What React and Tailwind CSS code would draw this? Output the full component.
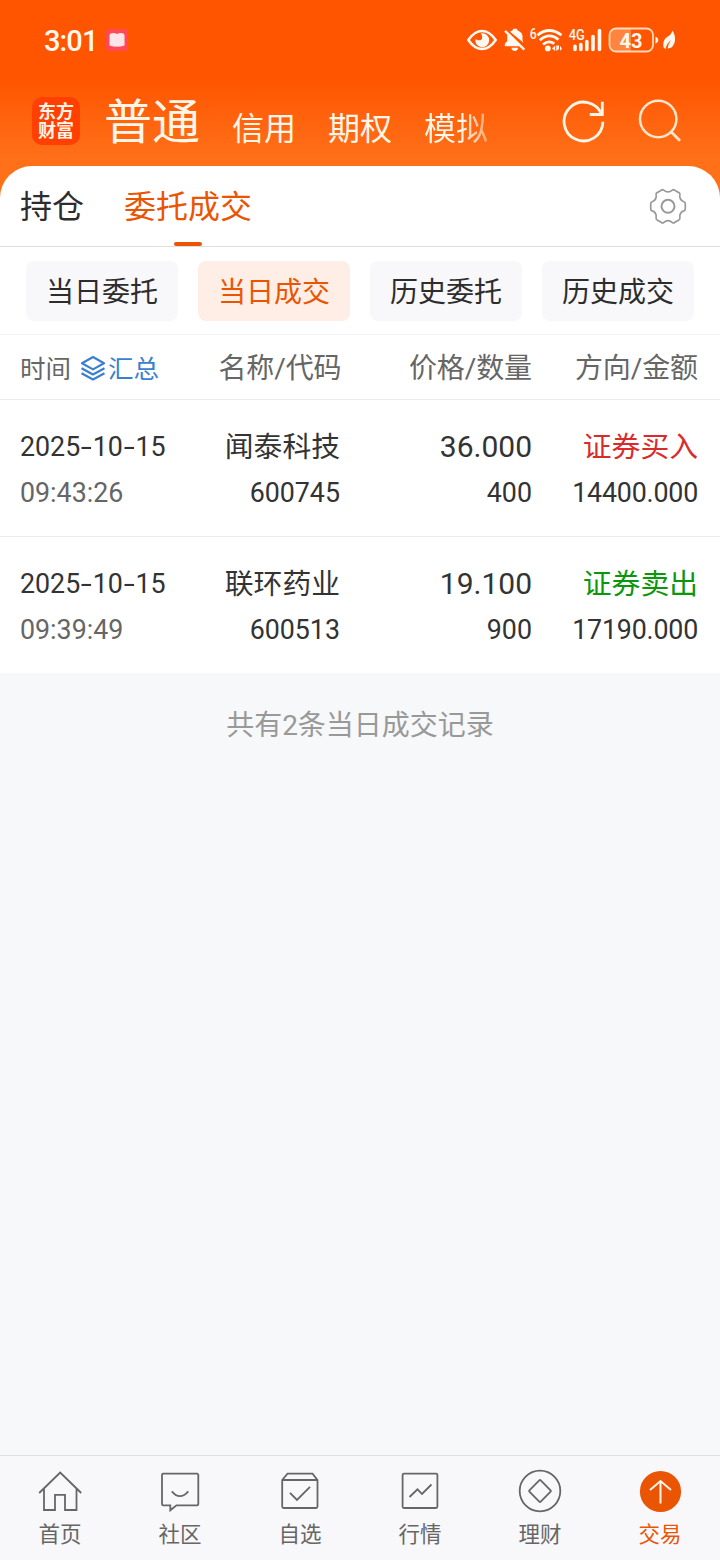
import React from "react";

const filters = ["当日委托", "当日成交", "历史委托", "历史成交"];

const trades = [
  { date: "2025-10-15", time: "09:43:26", name: "闻泰科技", code: "600745", price: "36.000", qty: "400", side: "证券买入", buy: true, amount: "14400.000" },
  { date: "2025-10-15", time: "09:39:49", name: "联环药业", code: "600513", price: "19.100", qty: "900", side: "证券卖出", buy: false, amount: "17190.000" },
];

function gearPath(cx, cy) {
  const pt = (r, deg) => {
    const a = (deg * Math.PI) / 180;
    return `${(cx + r * Math.cos(a)).toFixed(2)} ${(cy + r * Math.sin(a)).toFixed(2)}`;
  };
  let d = `M${pt(16.8, -15)}`;
  for (let k = 0; k < 6; k++) {
    const b = k * 60;
    d += `Q${pt(18, b - 12)} ${pt(17.4, b - 7)}L${pt(17.4, b + 7)}Q${pt(18, b + 12)} ${pt(16.8, b + 15)}Q${pt(12.6, b + 30)} ${pt(16.8, b + 45)}`;
  }
  return d + "Z";
}

function StatusBar() {
  return (
    <div className="flex h-20 items-center justify-between pl-[44px] pr-[43px] text-[#fff8ee]">
      <div className="flex items-center gap-[9px]">
        <span className="mt-0.5 w-[53px] whitespace-nowrap text-[29px] font-medium leading-none tracking-[-0.9px]">3:01</span>
        <svg width="22" height="22" viewBox="0 0 22 22">
          <rect width="22" height="22" rx="4" fill="#ff4a55" />
          <path d="M4.5 4.5Q8 3.5 11 5Q14 3.5 17.5 4.5L18.5 6V16.5Q15 18 11 17.5Q7 18 3.5 16.5V6Z" fill="#ffe3ea" />
        </svg>
      </div>
      <svg width="211" height="28" viewBox="466 26 211 28" fill="none" stroke="currentColor">
        <path d="M468.3 40Q474.5 31 482 31T495.7 40Q489.500 49 482 49T468.3 40Z" strokeWidth="2.600" strokeLinejoin="round" />
        <path d="M482 33.300A7 7 0 1 1 475.300 39.200Q480.500 41.500 482 38.700Q483 36 480.800 33.600Z" fill="currentColor" stroke="none" />
        <path d="M507.200 33.500L520.500 46.300H504.800V43.800L507.200 41ZM510 31.800Q513 30.600 513.300 28.800H516.700Q517 30.300 519.500 31.500Q522.500 33.200 522.500 36.500V40.500L523.500 42.800ZM511.300 47.800H518.200Q517.500 51 514.800 51Q512 51 511.300 47.800Z" fill="currentColor" stroke="none" />
        <path d="M505 30.800L524.300 49.600" strokeWidth="2.400" />
        <text x="529.800" y="39" fontSize="15.500" fontWeight="500" textLength="7" lengthAdjust="spacingAndGlyphs" fill="currentColor" stroke="none">6</text>
        <path d="M537.500 35.200Q549 25.800 561.500 35.200M539.800 40.200Q549 32 558.500 39.600M543 44.600Q548.500 39.600 554.300 43.600" strokeWidth="2.700" />
        <circle cx="547.800" cy="48.400" r="2.900" fill="currentColor" stroke="none" />
        <path d="M552 48.500L555.200 45.600V51ZM556.300 45.500V51L559 49V45.500ZM560 46L562 48.500L560 51Z" fill="currentColor" stroke="none" />
        <text x="568.800" y="39.700" fontSize="15" fontWeight="500" textLength="16" lengthAdjust="spacingAndGlyphs" fill="currentColor" stroke="none">4G</text>
        <path d="M575 46.300V49.500M580.800 44.500V49.500M586.800 41.500V49.500M593 36.500V49.500M599.500 30.500V49.500" strokeWidth="3.600" strokeLinecap="round" />
        <path d="M616 29H631V51H616Q610 51 610 45V35Q610 29 616 29Z" fill="#ff8440" stroke="none" />
        <rect x="609.500" y="28.500" width="43.500" height="23" rx="6.500" stroke="#ffd9b8" strokeWidth="1.800" />
        <text x="619.500" y="47.500" fontSize="20.500" fontWeight="700" textLength="23" lengthAdjust="spacingAndGlyphs" fill="currentColor" stroke="none">43</text>
        <path d="M655.500 36.500Q658.300 37.500 658.300 40T655.500 44Z" fill="currentColor" stroke="none" />
        <path d="M672.500 30.700Q675.800 35.500 674.800 41.500Q673.500 48.300 667.500 48.500Q668 44 671.200 40Q666.300 43.500 665.500 49.300L663.600 47.500Q662.300 42 665.500 38.200Q668 36.400 669.800 35.200Q671.500 33.700 672.500 30.700Z" fill="currentColor" stroke="none" />
      </svg>
    </div>
  );
}

function TopNav() {
  return (
    <div className="flex h-[86px] items-start text-[#fff6e8]">
      <div className="ml-8 mt-[17px] grid h-12 w-12 place-content-center rounded-[10px] bg-[#ff4000] text-center text-[18px] font-bold leading-[19px] text-[#fff3e4]">
        <span>东方</span>
        <span>财富</span>
      </div>
      <div className="ml-6 mt-[19px] text-[48px] leading-[48px]">普通</div>
      <div className="ml-8 mt-[33px] flex gap-8 text-[32px] leading-8">
        <span>信用</span>
        <span>期权</span>
        <span className="bg-linear-to-r from-[#fff6e8] from-60% to-[#ffa56c] bg-clip-text text-transparent">模拟</span>
      </div>
      <svg className="ml-[74px] mt-[18px]" width="122" height="46" viewBox="562 98 122 46" fill="none" stroke="currentColor">
        <path d="M602.900 121.800A19.400 19.400 0 1 1 601.600 114.500M602.300 101.800V114.500H589.800" strokeWidth="2.800" />
        <circle cx="658.200" cy="119" r="18.200" stroke="#ffe5cc" strokeWidth="2.500" />
        <path d="M671.200 132L680 140.800" stroke="#ffe5cc" strokeWidth="2.700" />
      </svg>
    </div>
  );
}

function Tabs() {
  return (
    <div className="flex h-[81px] items-start border-b border-[#dedede] pl-5 pr-[33px]">
      <div className="mt-[25px] text-[32px] leading-8 text-[#2d2d2d]">持仓</div>
      <div className="ml-10 flex h-20 flex-col items-center justify-between pt-[25px] text-[#ea5504]">
        <span className="text-[32px] leading-8">委托成交</span>
        <span className="h-1 w-7 rounded-[2px] bg-[#ea5504]" />
      </div>
      <svg className="ml-auto mt-[21px]" width="38" height="38" viewBox="649 187 38 38" fill="none" stroke="#999">
        <path d={gearPath(668, 206.300)} strokeWidth="1.700" strokeLinejoin="round" />
        <circle cx="668" cy="206.300" r="6.500" strokeWidth="2" />
      </svg>
    </div>
  );
}

function Filters() {
  return (
    <div className="flex h-[88px] gap-5 border-b border-[#f5f5f5] px-[26px] pt-[14px] text-[28px]">
      {filters.map((f, i) => (
        <div
          key={f}
          className={`flex h-[60px] w-[152px] items-center justify-center rounded-lg pt-1 ${i === 1 ? "bg-[#ffeee6] text-[#ea5504]" : "bg-[#f8f8fb] text-[#2d2d2d]"}`}
        >
          {f}
        </div>
      ))}
    </div>
  );
}

const columns = "grid grid-cols-[162px_158px_192px_166px] pl-5";

function TableHead() {
  return (
    <div className={`${columns} h-[65px] items-center border-b border-[#ececec] pt-1 text-right text-[28px] text-[#666]`}>
      <div className="flex items-center text-[25.500px]">
        <span>时间</span>
        <svg className="-mt-0.5 ml-[9px]" width="27" height="28" viewBox="80 355 27 28" fill="none" stroke="#3a7fd0" strokeWidth="2.200" strokeLinejoin="round">
          <path d="M93 358L104 364.200L93 370.400L82 364.200ZM81.500 369.300L93 375.500L104.500 369.300M81.500 374.300L93 380.500L104.500 374.300" />
        </svg>
        <span className="ml-px text-[#3a7fd0]">汇总</span>
      </div>
      <div className="-mr-[1.500px] tracking-[-0.1px]">名称/代码</div>
      <div className="tracking-[-0.1px]">价格/数量</div>
      <div className="tracking-[-0.1px]">方向/金额</div>
    </div>
  );
}

function DateText({ value }) {
  return value.split("-").map((part, i) => (
    <React.Fragment key={i}>
      {i > 0 && <span className="inline-block w-[12.500px] scale-x-[1.500] text-center">-</span>}
      {part}
    </React.Fragment>
  ));
}

function TradeRow({ trade, last }) {
  return (
    <div className={`${columns} grid-rows-[46px_47px] items-center pt-6 text-right text-[26.800px] text-[#333] ${last ? "h-[136px]" : "h-[137px] border-b border-[#ececec]"}`}>
      <div className="whitespace-nowrap text-left"><DateText value={trade.date} /></div>
      <div className="pt-0.5 text-[28.800px]">{trade.name}</div>
      <div className="pb-0.5 text-[30px]">{trade.price}</div>
      <div className={`-ml-4 pt-0.5 text-[28.800px] ${trade.buy ? "text-[#d92b2b]" : "text-[#0c960c]"}`}>{trade.side}</div>
      <div className="text-left text-[#666]">{trade.time}</div>
      <div>{trade.code}</div>
      <div>{trade.qty}</div>
      <div className="tracking-[-0.2px]">{trade.amount}</div>
    </div>
  );
}

const navItems = [
  { label: "首页", box: "38 1468 44 46", icon: <path d="M39.200 1493L60.200 1472.600L81.200 1493M44 1489V1510H55V1494.800H65V1510H76.500V1489" /> },
  { label: "社区", box: "158 1468 44 46", icon: <path d="M163 1473.600H197A1.300 1.300 0 0 1 198.300 1475V1504A1.300 1.300 0 0 1 197 1505.300H176.500L170.300 1510.300V1505.300H163.300A1.300 1.300 0 0 1 162 1504V1475A1.300 1.300 0 0 1 163 1473.600ZM171.800 1491.300Q180 1501 188.300 1491.300" /> },
  { label: "自选", box: "278 1468 44 46", icon: <path d="M282.200 1480L287.500 1473.600H312.500L317.500 1480V1506.500A1.500 1.500 0 0 1 316 1508H283.700A1.500 1.500 0 0 1 282.200 1506.500ZM282.200 1480H317.500M290 1492.800L297 1500L310 1486.800" /> },
  { label: "行情", box: "398 1468 44 46", icon: <path d="M404 1473.600H436A1.400 1.400 0 0 1 437.400 1475V1506.600A1.400 1.400 0 0 1 436 1508H404A1.400 1.400 0 0 1 402.600 1506.600V1475A1.400 1.400 0 0 1 404 1473.600ZM409.500 1497L417.500 1489.300L422 1494L431.500 1484.500" /> },
  { label: "理财", box: "518 1468 44 46", icon: <><circle cx="540" cy="1491" r="20.300" /><rect x="532" y="1483" width="16" height="16" rx="1" transform="rotate(45 540 1491)" /></> },
  { label: "交易", box: "638 1468 44 46", active: true, icon: <><circle cx="660.500" cy="1491.500" r="20.600" fill="#ea5504" stroke="none" /><path d="M660.500 1503.500V1481.500M650 1490L660.500 1481L671 1490" stroke="#fff5ea" strokeWidth="2" /></> },
];

function BottomNav() {
  return (
    <nav className="grid h-[105px] grid-cols-6 border-t border-[#dfe1e4] bg-[#f8f8fa] pt-3">
      {navItems.map((n) => (
        <div key={n.label} className={`flex flex-col items-center text-[21.500px] leading-8 ${n.active ? "text-[#ea5504]" : "text-[#666]"}`}>
          <svg width="44" height="46" viewBox={n.box} fill="none" stroke="#666" strokeWidth="1.800">{n.icon}</svg>
          <span className="mt-[5px]">{n.label}</span>
        </div>
      ))}
    </nav>
  );
}

export default function App() {
  return (
    <div className="flex h-[1560px] w-[720px] flex-col overflow-hidden bg-[#f6f8fa] font-[Roboto,'Noto_Sans_CJK_SC',sans-serif]">
      <header className="h-[200px] shrink-0 bg-linear-to-b from-[#ff5500] from-40% to-[#ff7018] to-80%">
        <StatusBar />
        <TopNav />
      </header>
      <main className="-mt-[34px] flex-1">
        <section className="rounded-t-[32px] bg-white">
          <Tabs />
          <Filters />
          <TableHead />
          {trades.map((t, i) => (
            <TradeRow key={t.code} trade={t} last={i === trades.length - 1} />
          ))}
        </section>
        <p className="mt-[33px] text-center text-[28px] leading-10 text-[#999]">共有2条当日成交记录</p>
      </main>
      <BottomNav />
    </div>
  );
}
